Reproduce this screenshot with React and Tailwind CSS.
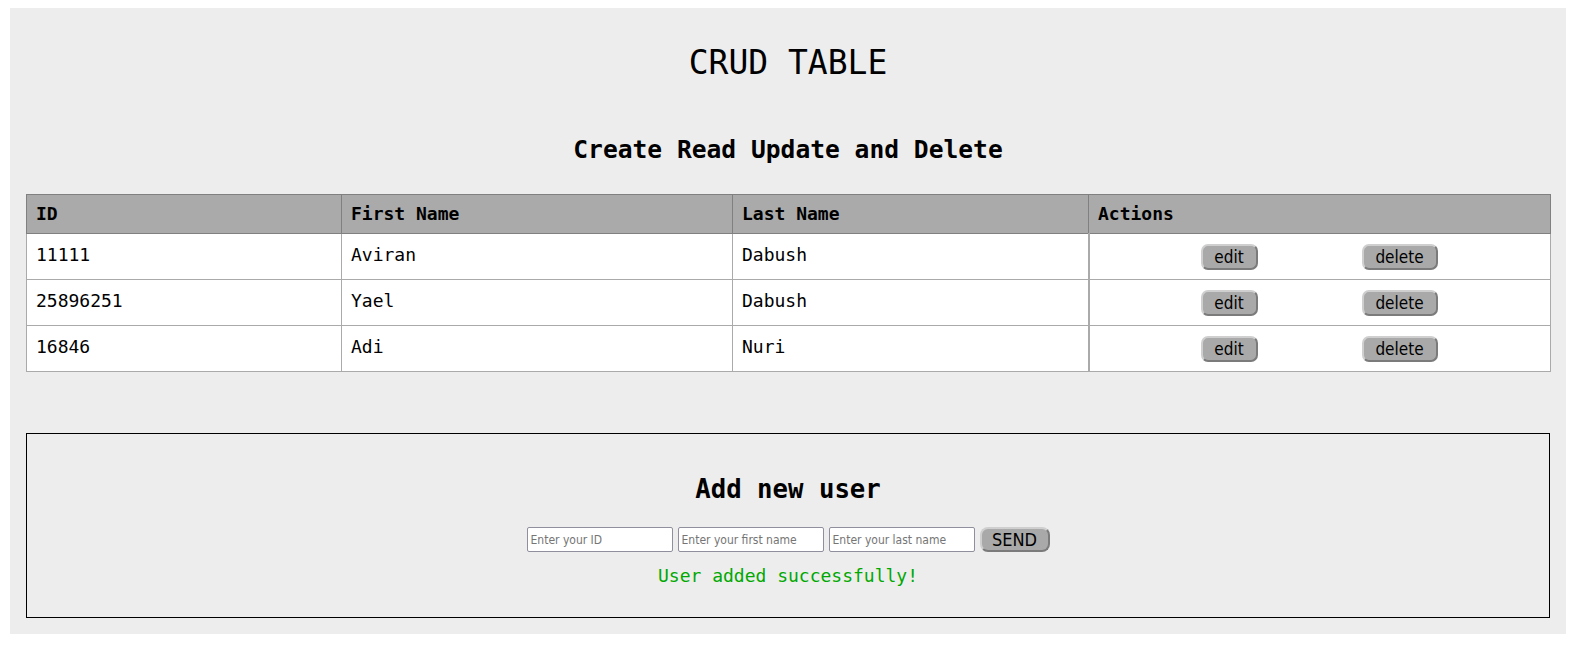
const users = [
  { id: '11111', first: 'Aviran', last: 'Dabush' },
  { id: '25896251', first: 'Yael', last: 'Dabush' },
  { id: '16846', first: 'Adi', last: 'Nuri' },
]

const mono = "font-['DejaVu_Sans_Mono','Liberation_Mono',monospace]"
const sans = "font-['DejaVu_Sans_Condensed','DejaVu_Sans',sans-serif]"

function ActionButton({ children, className = '' }) {
  return (
    <button
      className={`${sans} h-[26px] rounded-[7px] border-2 [border-style:outset] border-[#cfcfcf] bg-[#a9a9a9] text-[17px] leading-none text-black ${className}`}
    >
      {children}
    </button>
  )
}

export default function App() {
  return (
    <div className="min-h-[663px] bg-white pl-[10px] pt-[8px]">
      <div className={`${mono} w-[1556px] h-[626px] bg-[#ededed] px-[16px] pt-[35px] text-black`}>

        {/* titles */}
        <h1 className="text-center text-[33px] leading-[40px] font-normal">CRUD TABLE</h1>
        <h2 className="mt-[51px] text-center text-[24.6px] leading-[32px] font-bold">
          Create Read Update and Delete
        </h2>

        {/* table */}
        <table className="mt-[28px] w-[1524px] table-fixed border-collapse text-[18px]">
          <colgroup>
            <col className="w-[315px]" />
            <col className="w-[391px]" />
            <col className="w-[356px]" />
            <col className="w-[462px]" />
          </colgroup>
          <thead>
            <tr className="h-[39px] bg-[#aaaaaa]">
              <th className="border border-[#808080] pl-[9px] pb-[1px] text-left font-bold">ID</th>
              <th className="border border-[#808080] pl-[9px] pb-[1px] text-left font-bold">First Name</th>
              <th className="border border-[#808080] pl-[9px] pb-[1px] text-left font-bold">Last Name</th>
              <th className="border border-[#808080] pl-[9px] pb-[1px] text-left font-bold">Actions</th>
            </tr>
          </thead>
          <tbody>
            {users.map((u) => (
              <tr key={u.id} className="h-[46px] bg-white">
                <td className="border border-[#aaaaaa] pl-[9px] pb-[4px]">{u.id}</td>
                <td className="border border-[#aaaaaa] pl-[9px] pb-[4px]">{u.first}</td>
                <td className="border border-[#aaaaaa] pl-[9px] pb-[4px]">{u.last}</td>
                <td className="border border-[#aaaaaa] border-l-2 p-0">
                  <div className="flex items-center gap-[104px] pl-[111px] pt-[1px]">
                    <ActionButton className="w-[57px]">edit</ActionButton>
                    <ActionButton className="w-[76px]">delete</ActionButton>
                  </div>
                </td>
              </tr>
            ))}
          </tbody>
        </table>

        {/* add form */}
        <div className="mt-[61px] h-[185px] border border-black pt-[39px]">
          <h3 className="text-center text-[25.7px] leading-[32px] font-bold">Add new user</h3>
          <div className="mt-[22px] flex items-center justify-center gap-[5px]">
            <input
              placeholder="Enter your ID"
              className={`${sans} h-[25px] w-[146px] rounded-[2px] border border-[#8f8f9d] bg-white px-[3px] text-[12px] placeholder:text-[#757575]`}
            />
            <input
              placeholder="Enter your first name"
              className={`${sans} h-[25px] w-[146px] rounded-[2px] border border-[#8f8f9d] bg-white px-[3px] text-[12px] placeholder:text-[#757575]`}
            />
            <input
              placeholder="Enter your last name"
              className={`${sans} h-[25px] w-[146px] rounded-[2px] border border-[#8f8f9d] bg-white px-[3px] text-[12px] placeholder:text-[#757575]`}
            />
            <button
              className={`${sans} h-[25px] w-[70px] rounded-[8px] border-2 [border-style:outset] border-[#cfcfcf] bg-[#a9a9a9] text-[18px] leading-none text-black`}
            >
              SEND
            </button>
          </div>
          <p className="mt-[12px] text-center text-[18px] leading-[24px] text-[#00a800]">
            User added successfully!
          </p>
        </div>
      </div>
    </div>
  )
}
